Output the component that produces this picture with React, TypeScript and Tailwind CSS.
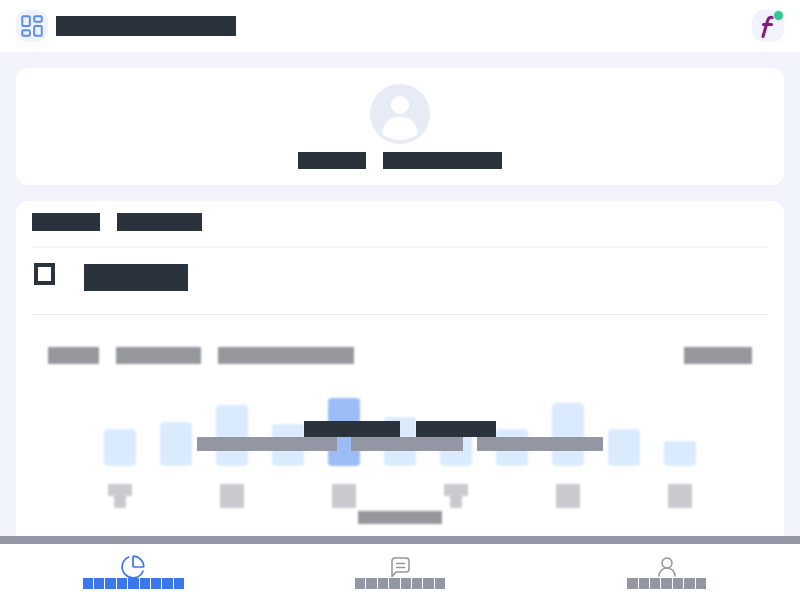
import React from 'react';
import { ChartPie, LayoutDashboard, UserRound } from 'lucide-react';

type BlockProps = {
  className: string;
};
const Block = ({ className }: BlockProps) => <div className={className} />;

const bars = [37, 44, 61, 42, 68, 49, 36, 37, 63, 37, 25];
const activeBar = 4;

type LabelProps = {
  shape: 'square' | 'tee';
};
const AxisLabel = ({ shape }: LabelProps) => (
  <div className="flex w-6 flex-col items-center blur-[1px]">
    {shape === 'square' ? (
      <div className="h-6 w-6 bg-[#c9cad0]" />
    ) : (
      <>
        <div className="h-3 w-6 bg-[#c9cad0]" />
        <div className="h-3 w-3 bg-[#c9cad0]" />
      </>
    )}
  </div>
);

type NavItemProps = {
  icon: React.ReactNode;
  count: number;
  active?: boolean;
};
const NavItem = ({ icon, count, active }: NavItemProps) => (
  <div className={`flex flex-1 flex-col items-center pt-2.5 ${active ? 'text-[#3b76ea]' : 'text-[#9396a3]'}`}>
    <div className="flex h-[26px] items-center justify-center">{icon}</div>
    <div className="-mt-0.5 flex gap-px">
      {Array.from({ length: count }).map((_, i) => (
        <div key={i} className={`h-[11px] w-[10.4px] ${active ? 'bg-[#3b76ea]' : 'bg-[#9396a3]'}`} />
      ))}
    </div>
  </div>
);

const ChatIcon = () => (
  <svg width="24" height="24" viewBox="0 0 24 24" fill="none" stroke="currentColor" strokeWidth="1.5" strokeLinecap="round" strokeLinejoin="round">
    <path d="M4 21.5V6a3 3 0 0 1 3-3h11a3 3 0 0 1 3 3v8a3 3 0 0 1-3 3H8z" />
    <path d="M8.5 8.5h8M8.5 12.5h8" />
  </svg>
);

const App = () => {
  return (
    <div className="flex h-[600px] w-[800px] flex-col overflow-hidden bg-[#f0f3fb]">
      <header className="flex h-[52px] shrink-0 items-center justify-between bg-white px-4">
        <div className="flex items-center gap-2">
          <div className="flex h-8 w-8 items-center justify-center rounded-xl bg-[#f0f3fb]">
            <LayoutDashboard size={26} strokeWidth={1.8} className="text-[#5b8def]" />
          </div>
          <Block className="h-5 w-[180px] bg-[#2a323c]" />
        </div>
        <div className="relative flex h-8 w-8 items-center justify-center rounded-xl bg-[#f0f3fb]">
          <svg width="20" height="28" viewBox="0 0 20 28" fill="none">
            <path
              d="M14.5 5.5c-2.5-.8-4.2.4-5 3.5L5 24.5M5.5 12.5h8"
              stroke="#86197f"
              strokeWidth="3"
              strokeLinecap="round"
            />
          </svg>
          <div className="absolute right-px top-px h-[9px] w-[9px] rounded-full bg-[#34c796] ring-1 ring-[#d5f5ea]" />
        </div>
      </header>

      <main className="flex min-h-0 flex-1 flex-col gap-4 px-4 pt-4">
        <section className="flex h-[117px] shrink-0 flex-col items-center rounded-xl bg-white pt-4">
          <div className="flex h-[60px] w-[60px] items-center justify-center rounded-full bg-[#e6ebf5]">
            <svg width="60" height="60" viewBox="0 0 60 60">
              <circle cx="30" cy="21" r="9" fill="#fff" />
              <path d="M12 50c1-11 8-17 18-17s17 6 18 17c-5 4-11 6-18 6s-13-2-18-6z" fill="#fff" />
            </svg>
          </div>
          <div className="mt-2 flex gap-[17px]">
            <Block className="h-[17px] w-[68px] bg-[#2a323c]" />
            <Block className="h-[17px] w-[119px] bg-[#2a323c]" />
          </div>
        </section>

        <section className="relative h-[360px] shrink-0 rounded-t-xl bg-white px-4 pt-3">
          <div className="flex gap-[17px] pb-4">
            <Block className="h-[18px] w-[68px] bg-[#2a323c]" />
            <Block className="h-[18px] w-[85px] bg-[#2a323c]" />
          </div>
          <div className="h-px bg-[#f0f1f6]" />
          <div className="flex h-[66px] pt-[15px]">
            <div className="ml-[2px] h-[22px] w-[21px] border-[4.5px] border-[#2a323c]" />
            <Block className="ml-[29px] mt-px h-[27px] w-[104px] bg-[#2a323c]" />
          </div>
          <div className="h-px bg-[#e9eaf1]" />

          <div className="mt-8 flex justify-between px-4 blur-[1px]">
            <div className="flex gap-[17px]">
              <Block className="h-[17px] w-[51px] bg-[#94979c]" />
              <Block className="h-[17px] w-[85px] bg-[#94979c]" />
              <Block className="h-[17px] w-[136px] bg-[#94979c]" />
            </div>
            <Block className="h-[17px] w-[68px] bg-[#94979c]" />
          </div>

          <div className="ml-[72px] mt-[33px] flex h-[69px] items-end gap-6 blur-[1px]">
            {bars.map((height, i) => (
              <div
                key={i}
                className={`w-8 rounded-sm ${i === activeBar ? 'bg-[#9bbcf5]' : 'bg-[#daebfe]'}`}
                style={{ height }}
              />
            ))}
          </div>

          <div className="ml-[76px] mt-[18px] flex gap-[88px]">
            <AxisLabel shape="tee" />
            <AxisLabel shape="square" />
            <AxisLabel shape="square" />
            <AxisLabel shape="tee" />
            <AxisLabel shape="square" />
            <AxisLabel shape="square" />
          </div>
          <div className="mt-[3px] flex justify-center blur-[1px]">
            <Block className="h-[13px] w-[84px] bg-[#94979c]" />
          </div>

          {/* tooltip over the chart */}
          <div className="absolute left-[181px] top-[220px] flex w-[406px] flex-col items-center">
            <div className="flex gap-4">
              <Block className="h-4 w-[96px] bg-[#2a323c]" />
              <Block className="h-4 w-[80px] bg-[#2a323c]" />
            </div>
            <div className="flex gap-3.5">
              <Block className="h-3.5 w-[140px] bg-[#9396a3]" />
              <Block className="h-3.5 w-[112px] bg-[#9396a3]" />
              <Block className="h-3.5 w-[126px] bg-[#9396a3]" />
            </div>
          </div>
        </section>
      </main>

      <nav className="z-10 flex h-16 shrink-0 border-t-8 border-[#9396a3] bg-white">
        <NavItem active count={9} icon={<ChartPie size={26} strokeWidth={1.6} />} />
        <NavItem count={8} icon={<ChatIcon />} />
        <NavItem count={7} icon={<UserRound size={24} strokeWidth={1.5} />} />
      </nav>
    </div>
  );
};

export default App;
